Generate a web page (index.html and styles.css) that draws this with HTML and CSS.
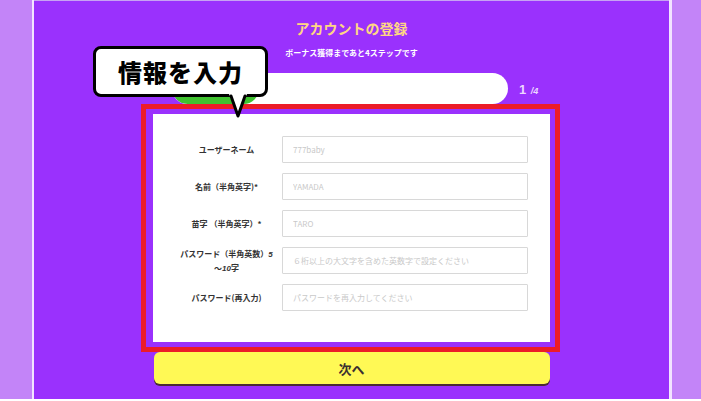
FILE: index.html
```html
<!DOCTYPE html>
<html lang="ja">
<head>
<meta charset="utf-8">
<title>アカウントの登録</title>
<link rel="stylesheet" href="styles.css">
</head>
<body>
<div class="page">
  <div class="side side-left"></div>
  <div class="sep sep-left"></div>
  <main class="main">
    <h1 class="title">アカウントの登録</h1>
    <p class="subtitle">ボーナス獲得まであと4ステップです</p>
    <div class="progress-row">
      <div class="track"><div class="fill" style="width:26%"></div></div>
      <div class="step"><span class="cur">1</span> <span class="tot">/4</span></div>
    </div>
    <form class="card">
      <div class="row"><label class="lbl">ユーザーネーム</label><input class="field" type="text" placeholder="777baby"></div>
      <div class="row"><label class="lbl">名前（半角英字)*</label><input class="field" type="text" placeholder="YAMADA"></div>
      <div class="row"><label class="lbl">苗字 （半角英字）*</label><input class="field" type="text" placeholder="TARO"></div>
      <div class="row"><label class="lbl lbl-two">パスワード（半角英数）<i>5</i><br>〜<i>10</i>字</label><input class="field" type="password" placeholder="６桁以上の大文字を含めた英数字で設定ください"></div>
      <div class="row"><label class="lbl">パスワード(再入力)</label><input class="field" type="password" placeholder="パスワードを再入力してください"></div>
    </form>
    <button class="next" type="button">次へ</button>
    <div class="highlight"></div>
    <div class="bubble">情報を入力<svg class="tail" width="20" height="26" viewBox="0 0 20 26"><path d="M1 0 L19 0 L10 23 Z" fill="#fff"/><path d="M3 2 L10 22 L17 2" fill="none" stroke="#000" stroke-width="3" stroke-linejoin="round" stroke-linecap="round"/></svg></div>
  </main>
  <div class="sep sep-right"></div>
  <div class="side side-right"></div>
</div>
</body>
</html>
```
FILE: styles.css
```css
* { box-sizing: border-box; }
html, body { margin: 0; padding: 0; }
body {
  background: #ffffff;
  font-family: "Noto Sans CJK JP", "Noto Sans", "Liberation Sans", sans-serif;
}
.page {
  display: flex;
  width: 701px;
  height: 399px;
}
.side { background: #c384f8; }
.side-left { width: 32px; }
.side-right { width: 29px; }
.sep { background: #f2e4ff; }
.sep-left { width: 2px; }
.sep-right { width: 3px; }
.main {
  position: relative;
  width: 635px;
  background: linear-gradient(#c7a2f3 0 1px, #9a31fd 1px);
  display: flex;
  flex-direction: column;
}
.title {
  margin: 18px 0 0;
  font-size: 14px;
  line-height: 20px;
  font-weight: 700;
  color: #ffd684;
  text-align: center;
}
.subtitle {
  margin: 9px 0 0;
  font-size: 8px;
  line-height: 12px;
  font-weight: 700;
  color: #ffffff;
  text-align: center;
}
.progress-row {
  display: flex;
  align-items: center;
  gap: 11px;
  width: 377px;
  margin: 14px auto 0;
  padding-left: 9px;
}
.track {
  width: 336px;
  height: 31px;
  background: #ffffff;
  border-radius: 16px;
  overflow: hidden;
}
.fill {
  height: 100%;
  background: #3fc22f;
  border-radius: 16px;
}
.step {
  color: #ecd6ff;
  font-family: "Liberation Sans", sans-serif;
  white-space: nowrap;
}
.cur { font-size: 13px; font-weight: 700; }
.tot { font-size: 9px; font-style: italic; font-weight: 700; }
.card {
  width: 397px;
  height: 228px;
  margin: 10px auto 0;
  background: #ffffff;
  padding: 22px 22px 0 18px;
  display: flex;
  flex-direction: column;
  gap: 10px;
}
.row {
  display: flex;
  align-items: center;
  height: 27px;
}
.lbl {
  width: 111px;
  flex: none;
  text-align: center;
  font-size: 8px;
  line-height: 13px;
  font-weight: 700;
  color: #333333;
}
.lbl i { font-style: italic; font-family: "Liberation Sans", sans-serif; }
.field {
  width: 246px;
  height: 27px;
  border: 1px solid #d8d8d8;
  border-radius: 1px;
  padding: 0 10px;
  font-size: 8px;
  font-family: inherit;
  background: #ffffff;
  outline: none;
}
.field::placeholder { color: #c9c9c9; }
.next {
  width: 396px;
  height: 32px;
  margin: 10px auto 0;
  background: #fff955;
  border: none;
  border-radius: 6px;
  box-shadow: 0 2px 0 #4a2c36;
  font-family: inherit;
  font-size: 13px;
  font-weight: 700;
  color: #3a3030;
  padding: 0;
}
.highlight {
  position: absolute;
  left: 107px;
  top: 104px;
  width: 419px;
  height: 248px;
  border: 5px solid #ec1c28;
  pointer-events: none;
}
.bubble {
  position: absolute;
  left: 59px;
  top: 46px;
  width: 175px;
  height: 51px;
  background: #ffffff;
  border: 3px solid #000000;
  border-radius: 8px;
  font-size: 24px;
  font-weight: 900;
  letter-spacing: 1px;
  line-height: 45px;
  text-align: center;
  color: #000000;
}
.tail {
  position: absolute;
  left: 132px;
  top: 45px;
  display: block;
}
```
